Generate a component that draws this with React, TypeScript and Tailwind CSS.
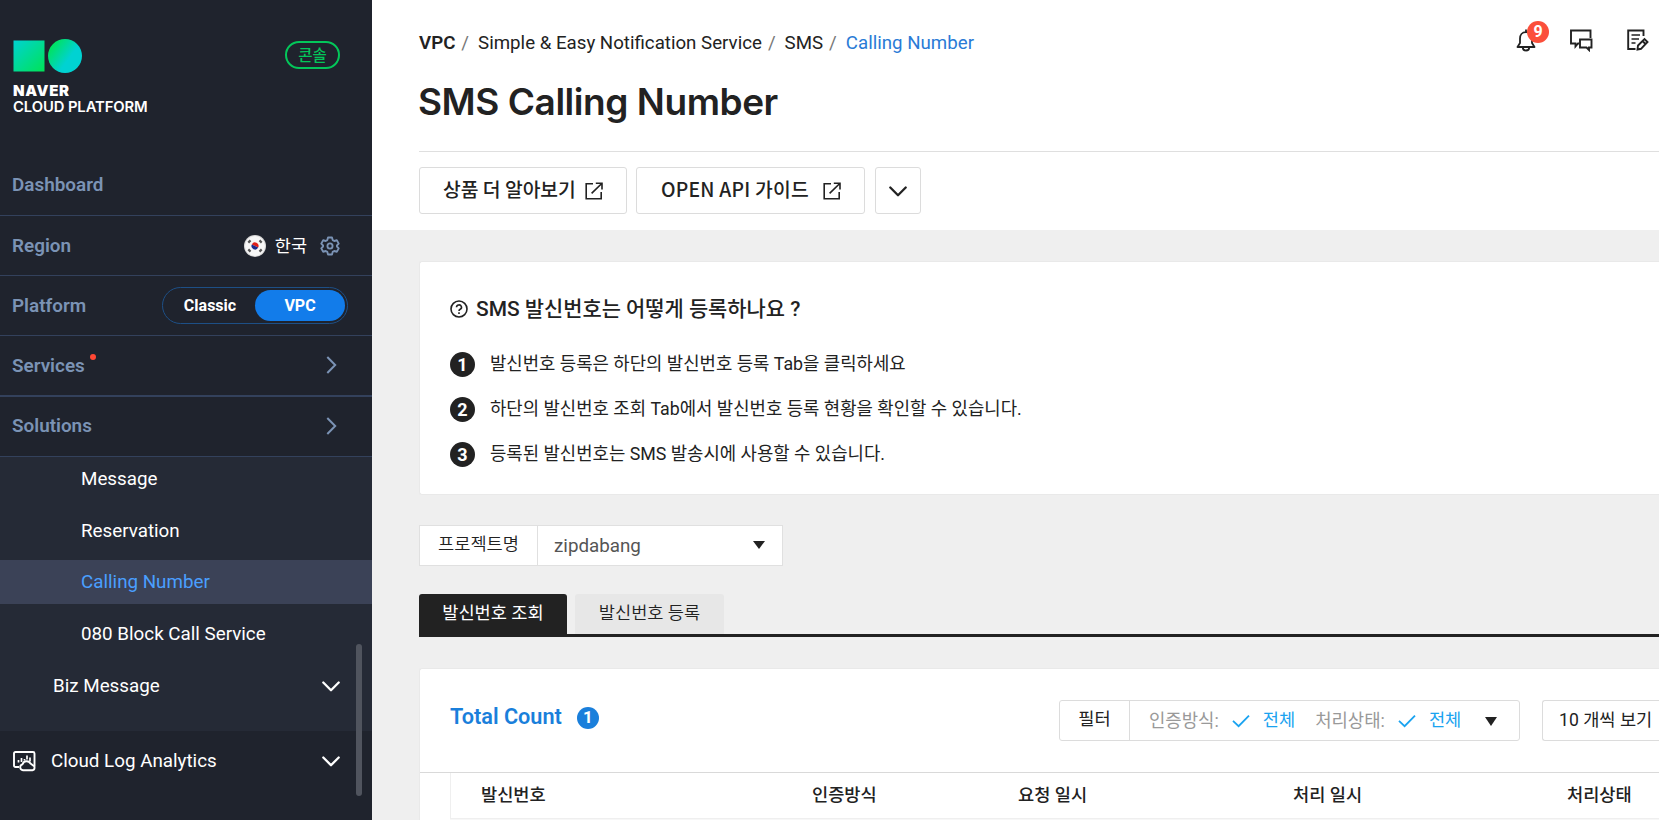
import React from 'react';

const FONT = "font-['Roboto','Noto_Sans_CJK_KR',sans-serif]";
const KR = "font-['Noto_Sans_CJK_KR',sans-serif]";

function ExternalIcon() {
  return (
    <svg width="18" height="18" viewBox="0 0 18 18" fill="none" stroke="#222" strokeWidth="1.6">
      <path d="M8 1.8H1.2v15h15V10" />
      <path d="M10.8 1.2H17v6.2M17 1.2L6.6 11.4" />
    </svg>
  );
}

function ChevronDown({ className }: { className?: string }) {
  return (
    <svg className={className} width="18" height="11" viewBox="0 0 18 11" fill="none" stroke="currentColor" strokeWidth="2.3" strokeLinecap="round" strokeLinejoin="round">
      <path d="M1.3 1.5L9 9.2L16.7 1.5" />
    </svg>
  );
}

function ChevronRight() {
  return (
    <svg className="mr-[35px] mb-px" width="11" height="18" viewBox="0 0 11 18" fill="none" stroke="#7b93b5" strokeWidth="2">
      <path d="M1.3 1L9.2 9L1.3 17" />
    </svg>
  );
}

function Check() {
  return (
    <svg width="18" height="14" viewBox="0 0 18 14" fill="none" stroke="#1aa3f0" strokeWidth="1.8">
      <path d="M1 6.8L6.6 12.2L17 1.6" />
    </svg>
  );
}

function Logo() {
  return (
    <svg width="70" height="36" viewBox="0 0 70 36">
      <defs>
        <linearGradient id="sq" x1="0" y1="0" x2="1" y2="1">
          <stop offset="0" stopColor="#00d2d2" />
          <stop offset="1" stopColor="#00e356" />
        </linearGradient>
        <linearGradient id="ci" x1="0.05" y1="0.2" x2="0.6" y2="0.6">
          <stop offset="0" stopColor="#00e356" />
          <stop offset="1" stopColor="#00d2d2" />
        </linearGradient>
      </defs>
      <rect x="0.5" y="1.5" width="31" height="31" fill="url(#sq)" />
      <circle cx="52" cy="17" r="17" fill="url(#ci)" />
    </svg>
  );
}

function Flag() {
  return (
    <svg width="22" height="22" viewBox="0 0 22 22">
      <circle cx="11" cy="11" r="11" fill="#d9d9d9" />
      <circle cx="11" cy="11" r="10" fill="#f7f7f7" />
      <path d="M7.5 11a3.5 3.5 0 0 1 7 0z" fill="#e0201b" transform="rotate(25 11 11)" />
      <path d="M14.5 11a3.5 3.5 0 0 1-7 0z" fill="#1b2b8c" transform="rotate(25 11 11)" />
      <g stroke="#555" strokeWidth="2.2">
        <path d="M4.3 7.6L6.5 5.4M15.5 5.4L17.7 7.6M4.3 14.4L6.5 16.6M15.5 16.6L17.7 14.4" />
      </g>
    </svg>
  );
}

function Gear() {
  return (
    <svg width="20" height="20" viewBox="0 0 24 24" fill="none" stroke="#7b93b5" strokeWidth="2.2" strokeLinejoin="round">
      <path d="M9.6 1.8h4.8l.8 3.1 1.9 1.1 3.1-.9 2.3 4.1-2.2 2.2v1.2l2.2 2.2-2.3 4.1-3.1-.9-1.9 1.1-.8 3.1H9.6l-.8-3.1L6.9 18l-3.1.9-2.3-4.1 2.2-2.2v-1.2L1.5 9.2l2.3-4.1 3.1.9 1.9-1.1z" />
      <circle cx="12" cy="12" r="3.1" />
    </svg>
  );
}

function LogAnalyticsIcon() {
  return (
    <svg className="mt-px" width="23" height="21" viewBox="0 0 23 21" fill="none" stroke="#fff" strokeWidth="1.9" strokeLinejoin="round">
      <path d="M6 16H2.5Q1 16 1 14.500V2.500Q1 1 2.500 1H20Q21.500 1 21.500 2.500V15" />
      <path d="M5.500 9v2.500M8.500 7v4M11.500 8v1.500M14 4.500v4M17 6.500v4" strokeWidth="1.700" />
      <path d="M10 19.200a3 3 0 0 1-.5-5.900a4.300 4.300 0 0 1 8-.7l4 3v1.500q0 2-2 2.100z" />
    </svg>
  );
}

function Sidebar() {
  const row = 'flex h-15 items-center justify-between border-b border-[#33415c] pl-3 text-[18.9px] font-semibold text-[#7b93b5]';
  return (
    <aside className="relative flex h-[820px] w-[372px] shrink-0 flex-col bg-[#1f232d]">
      <div className="flex h-[155px] items-start justify-between pt-[39px] pr-8 pl-[13px]">
        <div>
          <Logo />
          <div className="mt-[7px] font-['Inter'] text-[15px] leading-[17px] font-black tracking-[0.7px] text-white">NAVER</div>
          <div className="font-['Inter'] text-[14.8px] leading-[16px] font-semibold tracking-[-0.1px] text-white">CLOUD PLATFORM</div>
        </div>
        <div className={`${KR} mt-0.5 flex h-[28px] w-[55px] items-center justify-center rounded-full border-2 border-[#03c75a] pb-px text-[15.5px] leading-none font-medium text-[#03c75a]`}>
          콘솔
        </div>
      </div>
      <div className={`${row} h-[61px]`}>Dashboard</div>
      <div className={row}>
        <span className="pt-px">Region</span>
        <div className="mr-8 flex items-center">
          <Flag />
          <span className={`${KR} mr-[13px] ml-[9px] pb-0.5 text-[17.5px] leading-none font-normal text-white`}>한국</span>
          <Gear />
        </div>
      </div>
      <div className={row}>
        <span className="pt-px">Platform</span>
        <div className="mr-6 flex h-[37px] w-[186px] items-center rounded-full border border-[#1d4f86] p-0.5 text-[16px] font-bold text-white">
          <span className="w-[91px] text-center">Classic</span>
          <span className="flex h-[31px] w-[91px] items-center justify-center rounded-full bg-[#127cea]">VPC</span>
        </div>
      </div>
      <div className={`${row} h-[61px] border-b-2`}>
        <span className="relative pt-px">
          Services
          <i className="absolute top-[3px] -right-[11px] size-1.5 rounded-full bg-[#ff4734]" />
        </span>
        <ChevronRight />
      </div>
      <div className={row}>
        <span>Solutions</span>
        <ChevronRight />
      </div>
      <nav className="h-[274px] bg-[#252a36] text-[18.8px] text-white">
        <div className="flex h-[44px] items-center pl-[81px]">Message</div>
        <div className="mt-2 flex h-[44px] items-center pl-[81px]">Reservation</div>
        <div className="mt-[7px] flex h-[44px] items-center bg-[#3b4257] pl-[81px] text-[#4a9fff]">Calling Number</div>
        <div className="mt-2 flex h-[44px] items-center pl-[81px]">080 Block Call Service</div>
        <div className="mt-2 flex h-[44px] items-center justify-between pr-8 pl-[53px]">
          Biz Message
          <ChevronDown />
        </div>
      </nav>
      <div className="flex h-[59px] items-center pr-8 pl-[13px] text-[18.8px] text-white">
        <LogAnalyticsIcon />
        <span className="ml-[15px] flex-1 pt-px">Cloud Log Analytics</span>
        <ChevronDown className="mt-px" />
      </div>
      <div className="absolute top-[644px] left-[356px] h-[152px] w-1.5 rounded-full bg-[#50545e]" />
    </aside>
  );
}

function TopIcons() {
  return (
    <div className="flex items-start pt-[29px]">
      <div className="relative">
        <svg width="20" height="23" viewBox="0 0 20 23" fill="none" stroke="#222" strokeWidth="1.8" strokeLinejoin="round">
          <path d="M10 3.200C6 3.200 4 6 4 9.500V14L1.500 18H18.500L16 14V9.500C16 6 14 3.200 10 3.200zM10 .5V3" />
          <path d="M6.800 18.500a3.200 3 0 0 0 6.400 0" />
        </svg>
        <span className="absolute -top-2 left-[11px] flex size-[22px] items-center justify-center rounded-full bg-[#fb4f3b] text-[16px] font-bold text-white">9</span>
      </div>
      <svg className="ml-[34px]" width="23" height="23" viewBox="0 0 23 23" fill="none" stroke="#222" strokeWidth="1.9">
        <path d="M9 14.500H8L5.500 17.500V14.500H1V1.500H20.500V9" />
        <path d="M10 10.500H21.500V18.500H19V21L16.500 18.500H10z" />
      </svg>
      <svg className="ml-[34px]" width="22" height="22" viewBox="0 0 22 22" fill="none" stroke="#222" strokeWidth="1.9">
        <path d="M16.500 7V1.500H1.200V20H8.500" />
        <path d="M4.500 6H13M4.500 10H12M4.500 14H8.500" strokeWidth="1.600" />
        <path d="M10.500 20.500L11 16.500L17.500 10L20.500 13L14 19.800zM15.500 12L18.500 15" />
      </svg>
    </div>
  );
}

function Header() {
  const btn = `${KR} flex h-[47px] items-center rounded-[3px] border border-[#dcdcdc] text-[19.3px] leading-none font-medium`;
  return (
    <header className="h-[230px] bg-white pl-[47px]">
      <div className="flex h-[76px] justify-between pr-[10px]">
        <div className="flex items-start pt-[32px] text-[18.7px] leading-[23px] whitespace-pre">
          <b className="font-semibold">VPC</b>
          <span className="mr-[5px] ml-1.5 text-[#777]">/</span>
          <span className="ml-1">Simple &amp; Easy Notification Service</span>
          <span className="mr-[5px] ml-1.5 text-[#777]">/</span>
          <span className="ml-1">SMS</span>
          <span className="mr-[5px] ml-1.5 text-[#777]">/</span>
          <span className="ml-1 text-[#2a7bd6]">Calling Number</span>
        </div>
        <TopIcons />
      </div>
      <h1 className="h-[76px] border-b border-[#dfdfdf] font-['Inter'] text-[37px] leading-[52px] font-semibold tracking-[-0.45px]">
        <span className="-ml-px">SMS Calling Number</span>
      </h1>
      <div className="flex pt-[15px]">
        <div className={`${btn} w-[208px] pl-[23px]`}>
          <span className="mr-[9px] pb-px whitespace-nowrap">상품 더 알아보기</span>
          <ExternalIcon />
        </div>
        <div className={`${btn} ml-[9px] w-[229px] pl-[24px]`}>
          <span className="mr-[14px] pb-px tracking-[0.25px] whitespace-nowrap">OPEN API 가이드</span>
          <ExternalIcon />
        </div>
        <div className={`${btn} ml-[10px] w-[46px] justify-center pt-0.5`}>
          <ChevronDown />
        </div>
      </div>
    </header>
  );
}

const steps = [
  '발신번호 등록은 하단의 발신번호 등록 Tab을 클릭하세요',
  '하단의 발신번호 조회 Tab에서 발신번호 등록 현황을 확인할 수 있습니다.',
  '등록된 발신번호는 SMS 발송시에 사용할 수 있습니다.',
];

function Guide() {
  return (
    <section className="h-[234px] rounded-l-[3px] border border-r-0 border-[#e9e9e9] bg-white pt-[33px] pl-[30px]">
      <div className="flex h-[28px] items-center">
        <svg width="18" height="18" viewBox="0 0 18 18" fill="none" stroke="#222" strokeWidth="1.6">
          <circle cx="9" cy="9" r="8" />
          <path d="M6.500 7.200a2.500 2.300 0 1 1 3.700 2C9.300 9.700 9 10 9 11M9 12.300v1.700" />
        </svg>
        <h2 className="ml-2 text-[20.9px] leading-none font-medium">SMS 발신번호는 어떻게 등록하나요 ?</h2>
      </div>
      <ol className="mt-[19px]">
        {steps.map((step, i) => (
          <li key={step} className="flex h-[45px] items-center">
            <span className="flex size-[25px] items-center justify-center rounded-full bg-[#222] text-[18px] font-bold text-white">{i + 1}</span>
            <span className="ml-[15px] pb-0.5 text-[17.8px] leading-none font-normal">{step}</span>
          </li>
        ))}
      </ol>
    </section>
  );
}

const columns = [
  { name: '발신번호', width: 'w-[331px]' },
  { name: '인증방식', width: 'w-[206px]' },
  { name: '요청 일시', width: 'w-[275px]' },
  { name: '처리 일시', width: 'w-[274px]' },
  { name: '처리상태', width: 'w-[90px]' },
];

function CountTable() {
  return (
    <section className="mt-[31px] h-[152px] overflow-hidden rounded-tl-[3px] border-t border-l border-[#e9e9e9] bg-white">
      <div className="flex h-[104px] items-start justify-between border-b border-[#d9d9d9] pl-[30px]">
        <div className="flex items-center pt-[36px] text-[#1a7fdb]">
          <span className="text-[21.7px] leading-[24px] font-semibold">Total Count</span>
          <span className="mt-0.5 ml-[15px] flex size-[22px] items-center justify-center rounded-full bg-[#1a7fdb] text-[17px] font-bold text-white">1</span>
        </div>
        <div className="flex pt-[31px] text-[17.6px] leading-none">
          <div className="flex h-[41px] w-[461px] items-center rounded-[3px] border border-[#dcdcdc]">
            <span className="flex h-full w-[70px] items-center justify-center border-r border-[#dcdcdc] pb-0.5">필터</span>
            <span className="mr-[13px] ml-[19px] text-[17.8px] text-[#999]">인증방식:</span>
            <Check />
            <span className="mr-5 ml-[13px] text-[#1aa3f0]">전체</span>
            <span className="mr-[13px] text-[17.8px] text-[#999]">처리상태:</span>
            <Check />
            <span className="mr-6 ml-[13px] text-[#1aa3f0]">전체</span>
            <svg className="mt-0.5" width="12" height="9" viewBox="0 0 12 9"><path d="M0 0h12L6 9z" fill="#222" /></svg>
          </div>
          <div className="ml-[22px] flex h-[41px] w-[117px] items-center rounded-l-[3px] border border-r-0 border-[#dcdcdc] pl-4 whitespace-nowrap">10 개씩 보기</div>
        </div>
      </div>
      <div className="ml-[30px] flex h-[46px] items-center border-b border-l border-[#efefef] pl-[30px] text-[17.6px] leading-none font-medium">
        {columns.map((c) => (
          <span key={c.name} className={`shrink-0 ${c.width}`}>{c.name}</span>
        ))}
      </div>
      <div className="ml-[30px] h-1 bg-[#f7f7f7]" />
    </section>
  );
}

function App() {
  return (
    <div className={`${FONT} flex h-[820px] w-[1659px] overflow-hidden bg-[#efefef] text-[#222]`}>
      <Sidebar />
      <main className="flex-1">
        <Header />
        <div className="pt-[31px] pl-[47px]">
          <Guide />
          <div className="mt-[30px] flex h-[41px] w-[364px] border border-[#e0e0e0] bg-white text-[17.6px] leading-none">
            <span className="flex w-[118px] items-center justify-center border-r border-[#e0e0e0] pb-0.5 font-[350]">프로젝트명</span>
            <div className="flex flex-1 items-center justify-between pr-[17px] pl-4 text-[18.8px] text-[#555]">
              <span className="pt-0.5">zipdabang</span>
              <svg className="-mt-0.5" width="12" height="8" viewBox="0 0 12 8"><path d="M0 0h12L6 8z" fill="#222" /></svg>
            </div>
          </div>
          <div className="mt-[28px] flex h-[43px] gap-2 border-b-3 border-[#222] text-[17.6px] leading-none">
            <span className="flex w-[148px] items-center justify-center rounded-t-[3px] bg-[#222] text-white">발신번호 조회</span>
            <span className="flex w-[149px] items-center justify-center rounded-t-[3px] bg-[#e7e7e7] font-[350]">발신번호 등록</span>
          </div>
          <CountTable />
        </div>
      </main>
    </div>
  );
}

export default App;
